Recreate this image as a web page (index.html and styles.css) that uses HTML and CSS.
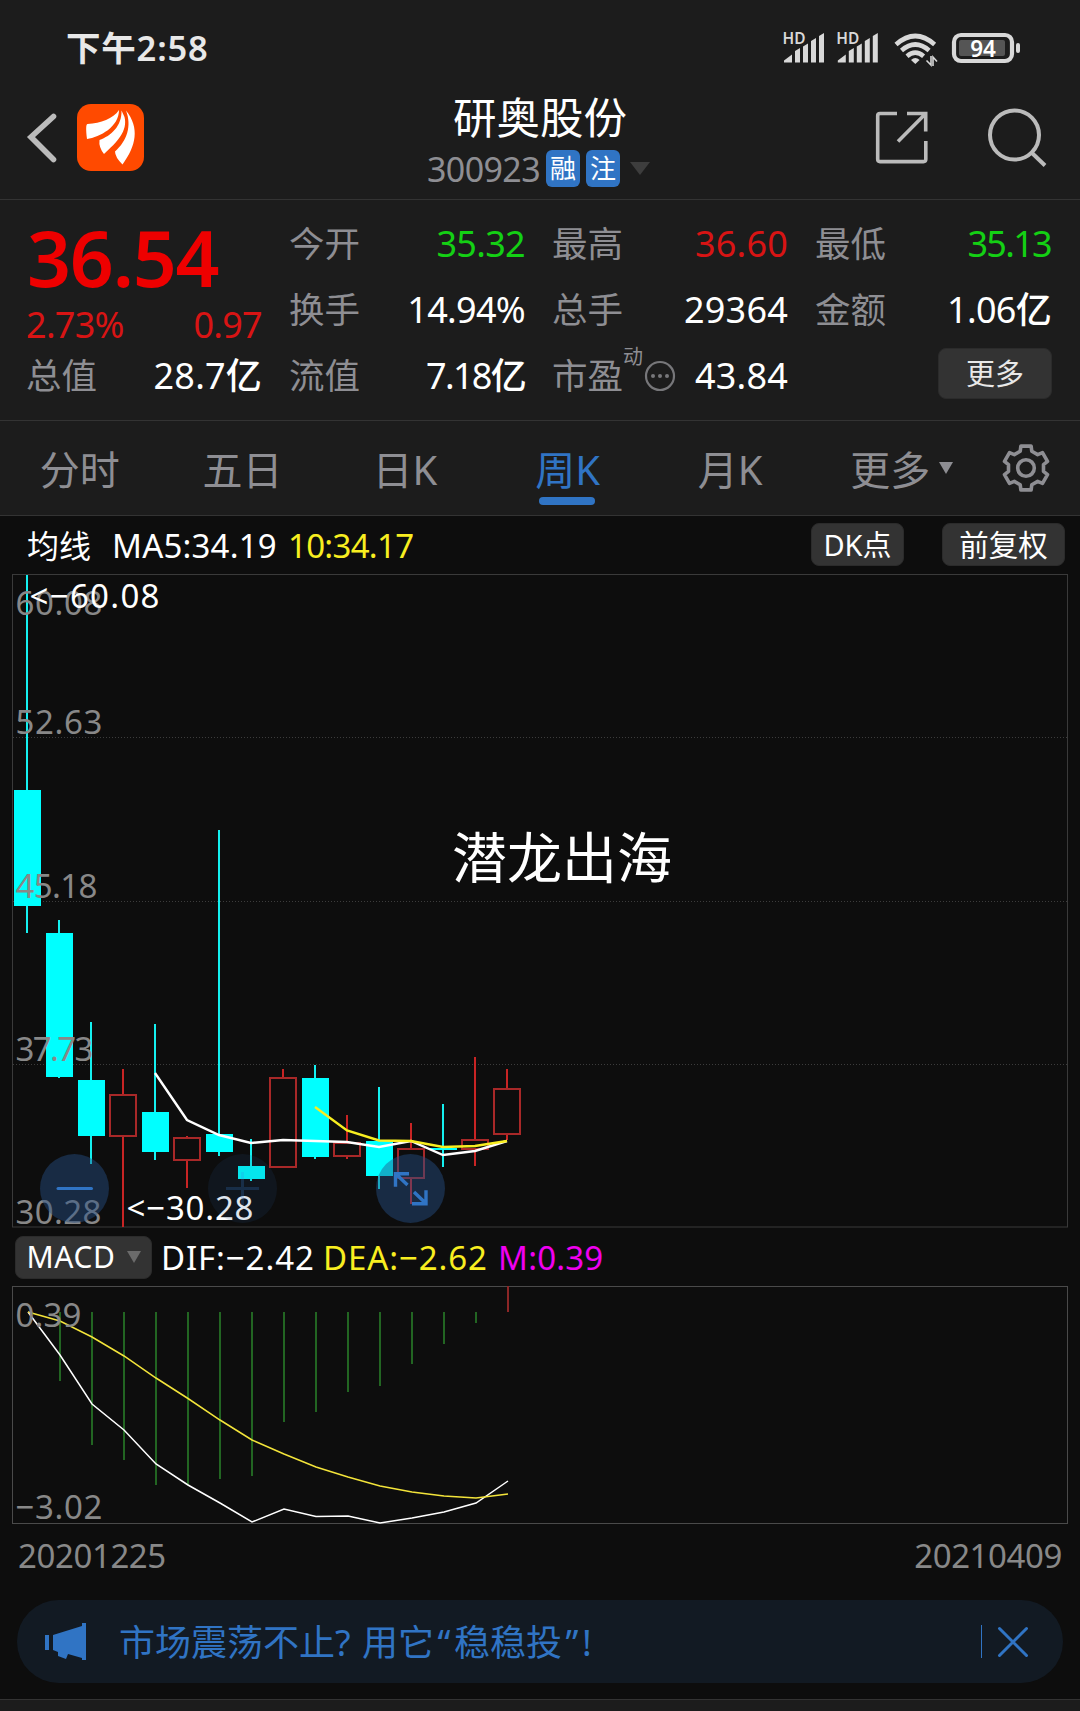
FILE: index.html
```html
<!DOCTYPE html>
<html lang="zh-CN">
<head>
  <meta charset="UTF-8">
  <title>研奥股份 300923</title>
  <meta name="viewport" content="width=device-width, initial-scale=1.0">
  <link rel="stylesheet" href="styles.css">
</head>
<body>
  <div class="status-bar">
    <span class="time">下午2:58</span>
    <svg class="status-icons" width="240" height="40" viewBox="782 28 240 40">
      <g id="signal" fill="#d8d8d8">
        <text x="782.500" y="43.500" class="hd" textLength="23" lengthAdjust="spacingAndGlyphs">HD</text>
        <path d="M784 62.500v-2l8-6v8zM795 62.500v-11.500l5-3v14.500zM803 62.500v-16l5-3v19zM811 62.500v-21.500l5-3v24.500zM819 62.500v-26.500l5-3v29.500z"/>
      </g>
      <use href="#signal" x="53.800"/>
      <g fill="none" stroke="#d8d8d8" stroke-width="4.600">
        <path d="M896 44.500q19.300-17 38.600 0"/>
        <path d="M901.500 50.500q13.800-12 27.600 0"/>
        <path d="M907 56.200q8.300-7 16.600 0"/>
      </g>
      <path d="M911 60q4.300-4 8.600 0l-4.300 4z" fill="#d8d8d8"/>
      <path d="M926.500 60.500l4.500 4.500v-9M937 61.500l-4-4.500v9" fill="none" stroke="#d8d8d8" stroke-width="1.600"/>
      <rect x="954" y="35" width="58" height="26" rx="7" fill="none" stroke="#d8d8d8" stroke-width="4.200"/>
      <rect x="959" y="40" width="46" height="16" rx="2" fill="#555"/>
      <rect x="1016" y="43" width="4" height="10" rx="2" fill="#d8d8d8"/>
      <text x="983" y="57" class="battery" text-anchor="middle">94</text>
    </svg>
  </div>

  <header class="header">
    <div class="header-left">
      <svg width="32" height="54" viewBox="27 110 32 54" fill="none" stroke="#bbb" stroke-width="5.600" stroke-linecap="round">
        <path d="M53.500 116.500L31 137L53.500 159.500"/>
      </svg>
      <svg class="logo" width="67" height="67" viewBox="77 105 67 67">
        <rect x="77" y="105" width="67" height="67" rx="14" fill="#ff4a00"/>
        <g fill="#fff">
          <path d="M119 111C113 120 101 124 87.500 125C86 125 85.800 130 87 140C100 138 119 128 119 111z"/>
          <path d="M121.500 111.500C122 127 111 137 99.500 141Q98.500 148 104 155C117 143 128 132 124.500 118z"/>
          <path d="M126 111.500C132 127 127 142 115 152.500Q115 158 122.500 165.500C136 147 140 129 126 111.500z"/>
        </g>
      </svg>
    </div>
    <div class="header-title">
      <h1>研奥股份</h1>
      <div class="code">
        <span class="code-num">300923</span>
        <span class="badge">融</span>
        <span class="badge">注</span>
        <svg width="20" height="13" viewBox="0 0 20 13"><path d="M0 0h20l-10 13z" fill="#3d3d3d"/></svg>
      </div>
    </div>
    <div class="header-right">
      <svg width="54" height="54" viewBox="875 110 54 54" fill="none" stroke="#bbb" stroke-width="3.600">
        <path d="M897 113.500h-17q-2.300 0-2.300 2.300v43.500q0 2.300 2.300 2.300h43.500q2.300 0 2.300-2.300v-18.300M907 113.500h18.700v18M925.500 113.700L898 141.500"/>
      </svg>
      <svg width="60" height="60" viewBox="987 107 60 60" fill="none" stroke="#bbb" stroke-width="4">
        <circle cx="1014.500" cy="135" r="24.500"/>
        <path d="M1031.500 152.500L1045 165.500"/>
      </svg>
    </div>
  </header>

  <section class="quote">
    <div class="col">
      <div class="price">36.54</div>
      <div class="row change red"><span>2.73%</span><span>0.97</span></div>
      <div class="row"><label>总值</label><b class="wide">28.7亿</b></div>
    </div>
    <div class="col">
      <div class="row"><label>今开</label><b class="green">35.32</b></div>
      <div class="row"><label>换手</label><b>14.94%</b></div>
      <div class="row"><label>流值</label><b class="tight">7.18亿</b></div>
    </div>
    <div class="col">
      <div class="row"><label>最高</label><b class="red wide">36.60</b></div>
      <div class="row"><label>总手</label><b class="wide">29364</b></div>
      <div class="row">
        <label>市盈<sup>动</sup></label>
        <svg class="more-dots" width="32" height="32" viewBox="0 0 32 32">
          <circle cx="16" cy="16" r="14" fill="none" stroke="#77777a" stroke-width="2.200"/>
          <g fill="#77777a"><circle cx="9" cy="16" r="2"/><circle cx="16" cy="16" r="2"/><circle cx="23" cy="16" r="2"/></g>
        </svg>
        <b class="wide">43.84</b>
      </div>
    </div>
    <div class="col">
      <div class="row"><label>最低</label><b class="green tight">35.13</b></div>
      <div class="row"><label>金额</label><b>1.06亿</b></div>
      <div class="row end"><button class="btn-more">更多</button></div>
    </div>
  </section>

  <nav class="tabs">
    <a>分时</a>
    <a>五日</a>
    <a>日K</a>
    <a class="active">周K</a>
    <a>月K</a>
    <a class="tab-more">更多<svg width="14" height="12" viewBox="0 0 14 12"><path d="M0 0h14l-7 12z" fill="#8e8e93"/></svg></a>
    <div class="gear">
      <svg width="48" height="50" viewBox="-24 -25 48 50" fill="none" stroke="#8e8e93" stroke-width="3.600">
        <circle r="8.300"/>
        <path id="gear-path" stroke-linejoin="round"/>
      </svg>
    </div>
  </nav>

  <main class="charts">
    <div class="ma-row">
      <span class="ma-name">均线</span>
      <span class="ma5">MA5:34.19</span>
      <span class="ma10 yellow">10:34.17</span>
      <button class="btn-dk">DK点</button>
      <button class="btn-fq">前复权</button>
    </div>

    <svg class="kline" width="1080" height="654" viewBox="0 574 1080 654">
      <rect x="12.500" y="574.500" width="1055" height="652.500" fill="none" stroke="#3a3a3a"/>
      <g stroke="#3c3c3c" stroke-dasharray="1 2">
        <path d="M13 737.500h1054M13 901.500h1054M13 1064.500h1054"/>
      </g>
      <g id="candles"></g>
      <polyline points="155,1073 187,1120 219,1135 251,1143 283,1140 315,1141 347,1142 379,1147 411,1141 443,1155 475,1151 507,1141" fill="none" stroke="#fff" stroke-width="2.400"/>
      <polyline points="315,1107 347,1130.500 379,1140.500 411,1141 443,1147 475,1146 507,1141" fill="none" stroke="#f8ee20" stroke-width="2.400"/>
      <g class="axis">
        <text x="15.500" y="614.500" textLength="87">60.08</text>
        <text x="15.500" y="733.500" textLength="87">52.63</text>
        <text x="15.500" y="897.500" textLength="82">45.18</text>
        <text x="15.500" y="1060.500" textLength="78">37.73</text>
        <text x="15.500" y="1223.500" textLength="86">30.28</text>
      </g>
      <g class="mark">
        <text x="29.500" y="608" textLength="130">&lt;−60.08</text>
        <text x="126.500" y="1220" textLength="127">&lt;−30.28</text>
      </g>
      <text x="452" y="878" class="slogan">潜龙出海</text>

      <!-- zoom buttons -->
      <g fill="none" stroke="#3074c4" stroke-width="3">
        <circle cx="74.500" cy="1188.500" r="34.500" class="round"/>
        <path d="M58 1188.500h33.500" stroke-linecap="round"/>
        <g opacity=".32">
          <circle cx="242.500" cy="1188.500" r="34.500" class="round"/>
          <path d="M226 1188.500h33M242.500 1172v33"/>
        </g>
        <circle cx="410.500" cy="1188.500" r="34.500" class="round"/>
        <path d="M409 1173.700h-13.500v13M396 1174l11.500 11M412 1203.700h14v-13.500M426 1203.500l-12-11.500" stroke-width="3.400"/>
      </g>
    </svg>

    <div class="macd-row">
      <button class="btn-macd">MACD <svg width="14" height="12" viewBox="0 0 14 12"><path d="M0 0h14l-7 12z" fill="#6b6b6b"/></svg></button>
      <span class="dif">DIF:−2.42</span>
      <span class="dea yellow">DEA:−2.62</span>
      <span class="m">M:0.39</span>
    </div>

    <svg class="macd" width="1080" height="238" viewBox="0 1286 1080 238">
      <rect x="12.500" y="1286.500" width="1055" height="237" fill="none" stroke="#4a4a4a"/>
      <g id="bars"></g>
      <polyline points="28,1312 60,1355 92,1404 124,1430 156,1464 188,1485 220,1503 252,1522 284,1509 316,1516.500 348,1516 380,1523 412,1518 444,1512 476,1503 508,1481" fill="none" stroke="#fff" stroke-width="1.500"/>
      <polyline points="28,1312 60,1321 92,1337 124,1356 156,1378 188,1398.500 220,1420 252,1440 284,1454 316,1467 348,1477 380,1486 412,1492 444,1496 476,1498 508,1494" fill="none" stroke="#f3e43a" stroke-width="1.500"/>
      <g class="axis">
        <text x="15.500" y="1326.500" textLength="66">0.39</text>
        <text x="15.500" y="1518.500" textLength="87">−3.02</text>
      </g>
    </svg>

    <div class="dates"><span>20201225</span><span>20210409</span></div>

    <div class="banner">
      <svg width="42" height="38" viewBox="0 0 42 38" fill="#3074c4">
        <path d="M0 12h4v15H0zM8 12L37 3V0h4v37h-4v-2l-14-4-2 5-8-3v-4l-5-2z"/>
      </svg>
      <span class="banner-text">市场震荡不止? <span class="after">用它<i>“</i>稳稳投<i>”</i>!</span></span>
      <span class="divider"></span>
      <svg class="close" width="32" height="32" viewBox="0 0 32 32" fill="none" stroke="#3074c4" stroke-width="3" stroke-linecap="round">
        <path d="M2.500 2.500l27 27M29.500 2.500l-27 27"/>
      </svg>
    </div>
  </main>
  <footer class="bottom"></footer>

  <script>
    // [high, body top, body bottom, low, up?]
    const candles = [
      [575, 790, 906, 933, 0], [920, 933, 1077, 1078, 0],
      [1022, 1080, 1136, 1164, 0], [1069, 1095, 1136, 1227, 1],
      [1024, 1112, 1152, 1160, 0], [1136, 1138, 1160, 1188, 1],
      [830, 1134, 1152, 1156, 0], [1139, 1166, 1179, 1181, 0],
      [1069, 1078, 1167, 1167, 1], [1065, 1078, 1157, 1159, 0],
      [1115, 1143, 1156, 1159, 1], [1087, 1141, 1176, 1189, 0],
      [1123, 1149, 1178, 1204, 1], [1104, 1148, 1150, 1167, 0],
      [1057, 1140, 1149, 1166, 1], [1069, 1089, 1134, 1140, 1]
    ];
    // bottoms of the MACD bars
    const bars = [1381, 1445, 1460, 1485, 1485, 1479, 1476, 1422, 1412, 1392, 1386, 1364, 1344, 1323];

    let html = '';
    candles.forEach(([high, top, bottom, low, up], i) => {
      const x = 27 + i * 32;
      if (up) {
        html += `<path d="M${x} ${high}V${top}M${x} ${bottom}V${low}" stroke="#c82424" stroke-width="2"/>`;
        html += `<rect x="${x - 13}" y="${top}" width="26" height="${bottom - top}" fill="none" stroke="#a82828" stroke-width="2"/>`;
      } else {
        html += `<path d="M${x} ${high}V${low}" stroke="#14f0f0" stroke-width="2"/>`;
        html += `<rect x="${x - 13}" y="${top}" width="27" height="${bottom - top}" fill="#00ffff"/>`;
      }
    });
    document.getElementById('candles').innerHTML = html;

    html = '';
    bars.forEach((y, i) => {
      html += `<path d="M${60 + i * 32} 1312V${y}" stroke="#226522" stroke-width="2"/>`;
    });
    html += '<path d="M508 1286V1312" stroke="#8c2626" stroke-width="2"/>';
    document.getElementById('bars').innerHTML = html;

    // six teeth
    let pts = [];
    for (let i = 0; i < 6; i++) {
      [[-19, 17.8], [-13, 22.5], [13, 22.5], [19, 17.8]].forEach(([a, r]) => {
        const t = (i * 60 - 90 + a) * Math.PI / 180;
        pts.push((Math.cos(t) * r).toFixed(1) + ' ' + (Math.sin(t) * r).toFixed(1));
      });
    }
    document.getElementById('gear-path').setAttribute('d', 'M' + pts.join('L') + 'z');
  </script>
</body>
</html>
```
FILE: styles.css
```css
:root {
  --panel: #1c1c1c;
  --bg: #0d0d0d;
  --line: #333;
  --gray: #8e8e93;
  --blue: #3074c4;
}

* {
  box-sizing: border-box;
}

body {
  margin: 0;
  width: 1080px;
  height: 1711px;
  overflow: hidden;
  background: var(--panel);
  color: #fff;
  font-family: "Noto Sans", "Noto Sans CJK SC", sans-serif;
  line-height: 1;
}

svg {
  display: block;
  flex: none;
  overflow: visible;
}

button {
  border: 1px solid #2b2b2b;
  border-radius: 8px;
  background: #333;
  color: #fff;
  font-family: inherit;
  padding: 0;
  line-height: 1;
  display: flex;
  align-items: center;
  justify-content: center;
  white-space: nowrap;
}

.yellow { color: #f8ee20; }
.red { color: #d81414; }
.green { color: #14d014; }

/* status bar */
.status-bar {
  height: 96px;
  padding: 28px 58px 28px 66px;
  display: flex;
  justify-content: space-between;
  align-items: center;
}

.time {
  font-size: 34.5px;
  font-weight: 600;
  color: #e8e8e8;
  letter-spacing: 0.8px;
}

.hd {
  font-size: 15.5px;
  font-weight: 600;
}

.battery {
  font-size: 22.5px;
  font-weight: 600;
  fill: #fff;
}

/* header */
.header {
  height: 104px;
  padding: 0 33px 0 27px;
  display: grid;
  grid-template-columns: 300px 426px 1fr;
  border-bottom: 1px solid var(--line);
}

.header-left {
  display: flex;
  align-items: center;
  gap: 18px;
  height: 82px;
}

.header-title {
  display: flex;
  flex-direction: column;
  align-items: center;
}

h1 {
  margin: -1px 0 0;
  font-size: 43.5px;
  font-weight: 400;
  line-height: 44px;
}

.code {
  display: flex;
  align-items: center;
  gap: 6px;
  margin-top: 11px;
  margin-right: 3px;
  height: 37px;
}

.code-num {
  font-size: 34px;
  letter-spacing: -0.6px;
  color: var(--gray);
}

.badge {
  width: 34px;
  height: 37px;
  border-radius: 6px;
  background: var(--blue);
  font-size: 26px;
  line-height: 37px;
  text-align: center;
}

.code svg {
  margin-left: 4px;
}

.header-right {
  display: flex;
  align-items: center;
  justify-content: flex-end;
  gap: 58px;
  height: 82px;
}

/* quote */
.quote {
  height: 221px;
  padding: 11px 29px 0 26px;
  display: grid;
  grid-template-columns: repeat(4, 236px);
  column-gap: 27px;
  border-bottom: 1px solid var(--line);
}

.row {
  height: 66px;
  display: flex;
  align-items: center;
  justify-content: space-between;
  font-size: 36px;
  letter-spacing: -0.7px;
}

.row label {
  font-size: 35.5px;
  letter-spacing: 0;
  color: var(--gray);
  position: relative;
}

.row b {
  font-weight: 450;
}

.row .wide {
  letter-spacing: 0.2px;
}

.row .tight {
  letter-spacing: -1.7px;
}

.row sup {
  position: absolute;
  left: 71px;
  top: -11px;
  font-size: 20px;
  line-height: 1;
}

.price {
  height: 92px;
  line-height: 92px;
  padding: 1px 0 0 1px;
  font-size: 77px;
  font-weight: 600;
  letter-spacing: -1.2px;
  color: #ee0000;
}

.change {
  height: 40px;
  padding-top: 4px;
}

.more-dots {
  margin-left: 21px;
  margin-right: auto;
}

.end {
  justify-content: flex-end;
}

.btn-more {
  width: 114px;
  height: 51px;
  margin-top: -6px;
  margin-right: -1px;
  font-size: 29px;
  color: #e8e8e8;
}

/* tabs */
.tabs {
  height: 95px;
  display: grid;
  grid-template-columns: repeat(6, 162.6px) 1fr;
  border-bottom: 1px solid var(--line);
  font-size: 40px;
  color: var(--gray);
}

.tabs a {
  display: flex;
  align-items: center;
  justify-content: center;
  position: relative;
  padding: 3px 3px 0 0;
}

.tabs .active {
  color: var(--blue);
}

.active::after {
  content: "";
  position: absolute;
  bottom: 10px;
  left: 51px;
  width: 56px;
  height: 8px;
  border-radius: 4px;
  background: var(--blue);
}

.tabs .tab-more {
  padding-right: 0;
  padding-left: 15px;
}

.tab-more svg {
  margin-left: 9px;
  margin-top: -3px;
}

.gear {
  display: flex;
  align-items: center;
  padding-left: 26px;
}

/* charts */
.charts {
  height: 1183px;
  background: var(--bg);
}

.ma-row {
  height: 58px;
  padding: 0 15px 0 27px;
  display: flex;
  align-items: center;
  font-size: 33px;
}

.ma-name {
  font-size: 32px;
  width: 85px;
  padding-top: 2px;
}

.ma5 {
  width: 176px;
  letter-spacing: 0.2px;
}

.ma10 {
  letter-spacing: -0.7px;
}

.ma5, .ma10 {
  padding-top: 1px;
}

.btn-dk {
  width: 93px;
  height: 43px;
  margin-top: -1px;
  margin-left: auto;
  font-size: 29px;
}

.btn-fq {
  width: 123px;
  height: 43px;
  margin-top: -1px;
  margin-left: 38px;
  font-size: 29.5px;
}

.axis {
  font-size: 33px;
  fill: #888;
}

.mark {
  font-size: 33px;
  font-weight: 450;
  fill: #fff;
}

.slogan {
  font-size: 55px;
  fill: #fff;
}

.round {
  fill: rgba(38, 80, 136, 0.45);
  stroke: none;
}

.macd-row {
  height: 58px;
  padding-left: 15px;
  display: flex;
  align-items: center;
  font-size: 33px;
  letter-spacing: 0.9px;
}

.btn-macd {
  width: 137px;
  height: 43px;
  margin-right: 9px;
  font-size: 30px;
  letter-spacing: 0.6px;
  gap: 11px;
}

.dif { width: 162px; }
.dea { width: 175px; }

.m {
  color: #f000f0;
  letter-spacing: 0.2px;
}

.dates {
  height: 76px;
  padding: 15px 18px 0;
  display: flex;
  justify-content: space-between;
  font-size: 33px;
  line-height: 34px;
  letter-spacing: -0.4px;
  color: #888;
}

.banner {
  height: 83px;
  margin: 0 17px;
  padding: 0 34px 0 28px;
  border-radius: 42px;
  background: #121a23;
  display: flex;
  align-items: center;
  color: var(--blue);
}

.banner-text {
  margin-left: 32px;
  padding-top: 3px;
  font-size: 36px;
  white-space: nowrap;
}

.after {
  margin-left: 2px;
}

.banner-text i {
  display: inline-block;
  width: 20px;
  font-style: normal;
  text-align: center;
}

.divider {
  width: 1px;
  height: 33px;
  margin-left: auto;
  margin-right: 15px;
  background: var(--blue);
}

.bottom {
  height: 12px;
  border-top: 1px solid var(--line);
  background: var(--panel);
}
```
